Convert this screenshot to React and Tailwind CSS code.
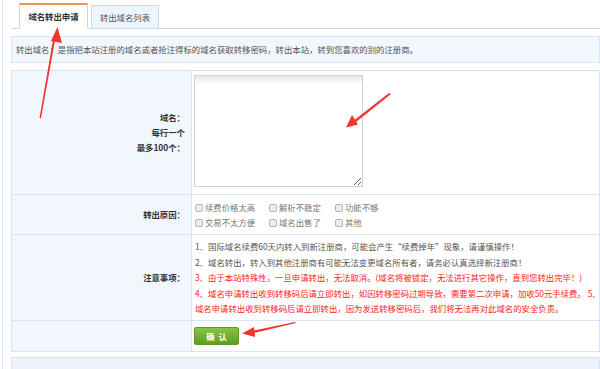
import React from 'react';

const reasons = [
  ['续费价格太高', '解析不稳定', '功能不够'],
  ['交易不太方便', '域名出售了', '其他'],
];

function Box({ label }) {
  return (
    <label className="flex items-center gap-[2px] text-[#777]">
      <span className="inline-block w-[8px] h-[8px] rounded-[2px] border border-[#b5b5b5] bg-[#ececec]" />
      <span>{label}</span>
    </label>
  );
}

export default function App() {
  return (
    <div
      className="relative w-[600px] h-[369px] overflow-hidden bg-white text-[8.4px] leading-[15px] text-[#555]"
      style={{ fontFamily: '"Noto Sans CJK SC", "Noto Sans", sans-serif' }}
    >
      <div className="ml-[2px] h-full border-l border-[#d9e5f3] pl-[8px]">
        {/* tabs */}
        <div className="flex items-end h-[29px] pt-[3px] pl-[8px] gap-[3px] border-b border-[#c9daef]">
          <div className="-mb-px h-[26px] w-[69px] border border-[#d4d4d4] border-t-2 border-t-[#f0964a] border-b-white bg-white flex items-center justify-center font-bold text-[#333]">
            域名转出申请
          </div>
          <div className="-mb-px h-[24px] w-[68px] border border-[#c9daef] bg-[#eef4fc] flex items-center justify-center text-[#555]">
            转出域名列表
          </div>
        </div>

        {/* info */}
        <div className="mt-[7px] h-[27px] border border-[#dbe6f4] bg-[#f2f6fd] pl-[4px] flex items-center whitespace-nowrap">
          转出域名：是指把本站注册的域名或者抢注得标的域名获取转移密码，转出本站，转到您喜欢的别的注册商。
        </div>

        {/* form table */}
        <div className="mt-[7px] border border-[#d6e4f5]">
          <div className="flex h-[124px] border-b border-[#d6e4f5]">
            <div className="w-[180px] shrink-0 bg-[#f2f6fd] border-r border-[#d6e4f5] flex flex-col items-end justify-center pr-[6px] font-bold text-[#333]">
              <span>域名：</span>
              <span>每行一个</span>
              <span>最多100个：</span>
            </div>
            <div className="pl-[2px] pt-[4px]">
              <textarea className="w-[169px] h-[112px] border border-[#d2d2d2] bg-white shadow-[inset_0_10px_6px_-6px_#e6e6e6] outline-none" />
            </div>
          </div>

          <div className="flex h-[40px] border-b border-[#d6e4f5]">
            <div className="w-[180px] shrink-0 bg-[#f2f6fd] border-r border-[#d6e4f5] flex items-center justify-end pr-[6px] font-bold text-[#333]">
              转出原因：
            </div>
            <div className="pl-[3px] pt-[1px] flex flex-col justify-center">
              {reasons.map((row, i) => (
                <div key={i} className="flex">
                  <div className="w-[74px]"><Box label={row[0]} /></div>
                  <div className="w-[66px]"><Box label={row[1]} /></div>
                  <div><Box label={row[2]} /></div>
                </div>
              ))}
            </div>
          </div>

          <div className="flex h-[86px] border-b border-[#d6e4f5]">
            <div className="w-[180px] shrink-0 bg-[#f2f6fd] border-r border-[#d6e4f5] flex items-center justify-end pr-[6px] font-bold text-[#333]">
              注意事项：
            </div>
            <div className="pl-[3px] pt-[4px] leading-[15.5px] whitespace-nowrap">
              <div>1、国际域名续费60天内转入到新注册商，可能会产生“续费掉年”现象，请谨慎操作！</div>
              <div>2、域名转出，转入到其他注册商有可能无法变更域名所有者，请务必认真选择新注册商！</div>
              <div className="text-[#f22]">3、由于本站特殊性，一旦申请转出，无法取消。(域名将被锁定，无法进行其它操作，直到您转出完毕！)</div>
              <div className="text-[#f22]">4、域名申请转出收到转移码后请立即转出，如因转移密码过期导致，需要第二次申请，加收50元手续费。 5、</div>
              <div className="text-[#f22]">域名申请转出收到转移码后请立即转出，因为发送转移密码后，我们将无法再对此域名的安全负责。</div>
            </div>
          </div>

          <div className="flex h-[30px]">
            <div className="w-[180px] shrink-0 bg-[#f2f6fd] border-r border-[#d6e4f5]" />
            <div className="pl-[2px] pt-[6px]">
              <button className="w-[45px] h-[18px] rounded-[2px] border border-[#5b9a22] bg-gradient-to-b from-[#86c443] to-[#5e9f22] text-white font-bold tracking-[4px] pl-[4px] flex items-center justify-center">
                确认
              </button>
            </div>
          </div>
        </div>

        <div className="mt-[5px] h-[20px] border border-[#d6e4f5] bg-[#eef3fb]" />
      </div>

      {/* red annotation arrows */}
      <svg className="absolute inset-0 pointer-events-none" width="600" height="369" viewBox="0 0 600 369">
        <g fill="#f2332f">
          <polygon points="39.5,118 53,40 55,40.3 41,118.3" />
          <polygon points="57.5,27 62,43 51,41" />
          <polygon points="391,94 356,122 354.5,120 389,93" />
          <polygon points="346,127.5 352,115 358,124.5" />
          <polygon points="296,323 254,333 253.5,330.5 295,322" />
          <polygon points="242,333.5 254,327 255,337" />
        </g>
      </svg>
    </div>
  );
}
